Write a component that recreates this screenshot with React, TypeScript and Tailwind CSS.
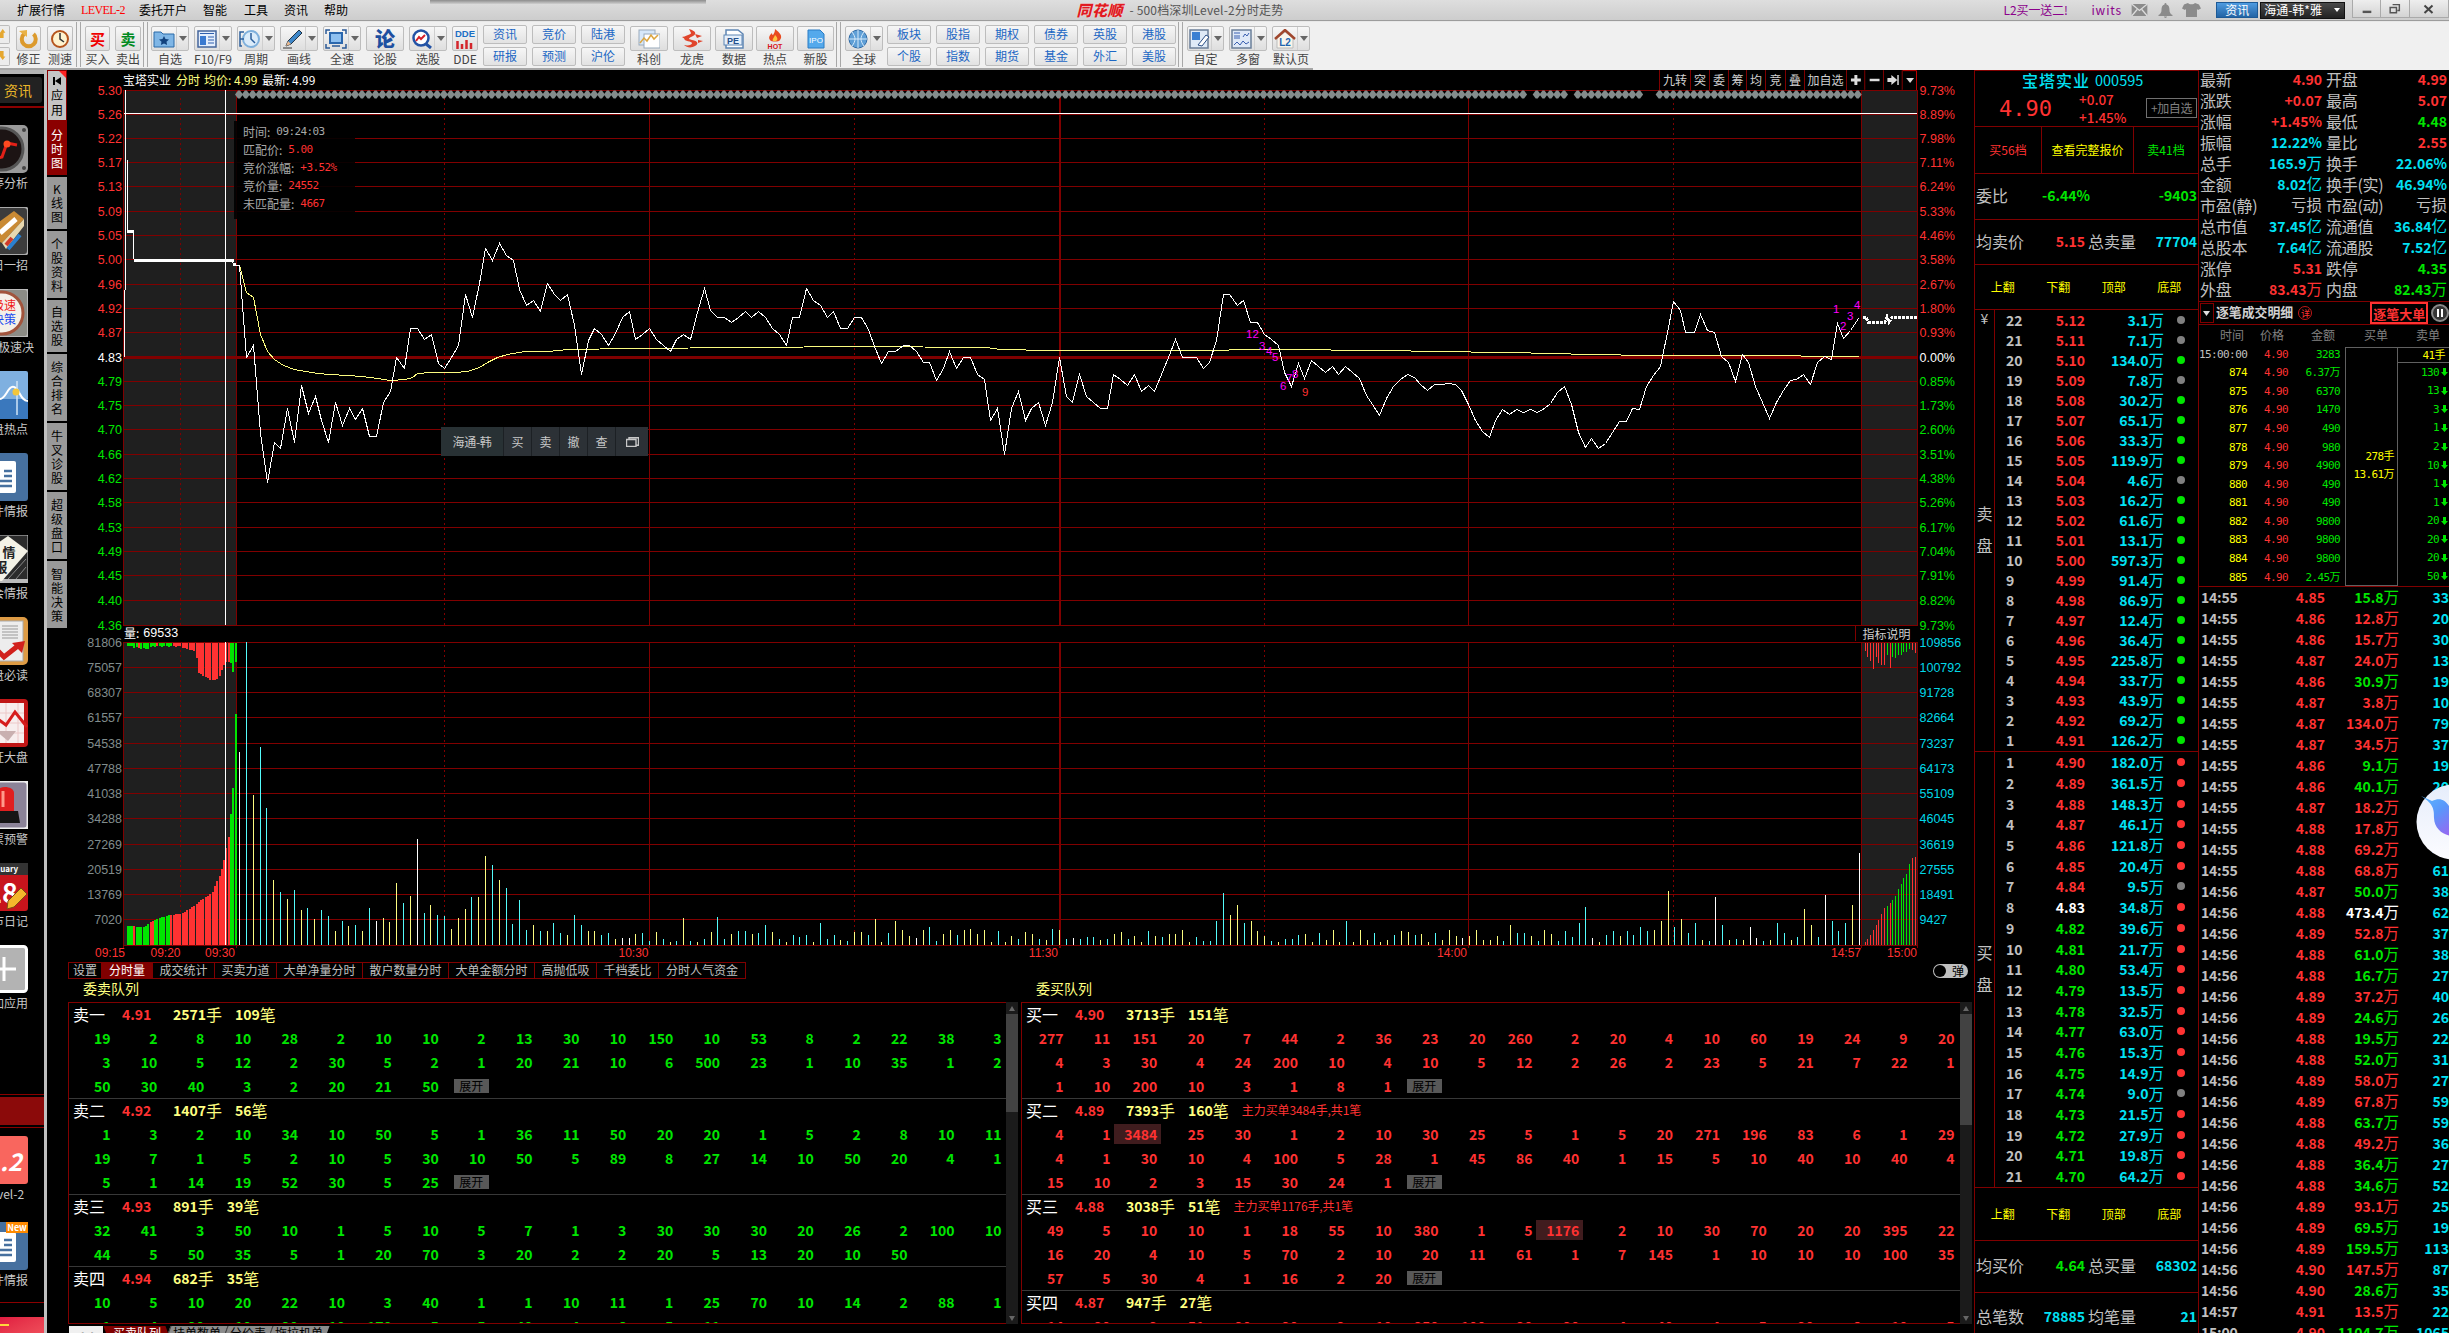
import React from "react";

const CJK = "font-['Noto_Sans_CJK_SC','Liberation_Sans',sans-serif]";

/* ---------- top bars ---------- */

function MenuBar() {
  const items = [
    ["扩展行情", "ml-[17px] text-black"],
    ["LEVEL-2", "ml-[16px] w-[42px] font-['Liberation_Serif'] tracking-[-0.6px] text-[#ff0000] text-[12px]"],
    ["委托开户", "ml-[16px] text-black"],
    ["智能", "ml-[16px] text-black"],
    ["工具", "ml-[17px] text-black"],
    ["资讯", "ml-[16px] text-black"],
    ["帮助", "ml-[16px] text-black"],
  ];
  return (
    <div className="relative flex h-[20px] shrink-0 items-center bg-linear-to-b from-[#dedede] to-[#cdcdcd] text-[12px] leading-none whitespace-nowrap">
      {items.map(([t, c]) => (
        <span key={t} className={c}>{t}</span>
      ))}
      <div className="ml-[82px] h-[4px] w-[276px] self-start bg-linear-to-b from-[#8d8d8d] to-[#cfcfcf]" />
      <div className="ml-[371px] flex items-center">
        <span className="w-[50px] text-[15px] leading-[16px] font-black tracking-[0.5px] text-[#e01b22] italic [text-shadow:0_0_1px_#fff]">同花顺</span>
        <span className="ml-[3px] w-[160px] text-[12px] tracking-[0.15px] text-[#555]">- 500档深圳Level-2分时走势</span>
      </div>
      <span className="ml-[714px] w-[70px] tracking-[-0.1px] text-[#8b008b]">L2买一送二!</span>
      <span className="ml-[18px] w-[32px] tracking-[0.9px] text-[#8b008b]">iwits</span>
      <svg className="ml-[8px] h-[12px] w-[17px]" viewBox="0 0 17 13"><rect width="17" height="13" fill="#8b8b8b" /><path d="M0 0L8.500 7L17 0M0 13L6 6M17 13L11 6" stroke="#ddd" fill="none" strokeWidth="1.400" /></svg>
      <svg className="ml-[10px] h-[15px] w-[15px]" viewBox="0 0 15 15"><path d="M7.500 0c1 0 1 1 1 1.500 2.500.8 3 3 3 5.500 0 2.500 1 4 3 5v1H.5v-1c2-1 3-2.500 3-5 0-2.500.5-4.700 3-5.500 0-.5 0-1.500 1-1.500zM6 13.600h3c0 1.800-3 1.800-3 0z" fill="#8b8b8b" /></svg>
      <svg className="ml-[9px] h-[14px] w-[19px]" viewBox="0 0 19 14"><path d="M6 0c1 1.800 6 1.800 7 0l4 1.500 2 4-3 1.500-1-1V14H4V6L3 7 0 5.500l2-4z" fill="#8b8b8b" /></svg>
      <div className="ml-[15px] flex h-[16px] w-[42px] items-center justify-center border border-[#1d5a96] bg-linear-to-b from-[#4e9be0] to-[#2364a5] text-white">资讯</div>
      <div className="ml-[2px] flex h-[17px] w-[85px] items-center justify-between border border-[#111] bg-linear-to-b from-[#4a4a4a] to-[#222] pr-[4px] pl-[3px] text-white">
        海通-韩*雅
        <svg className="h-[4px] w-[6px]" viewBox="0 0 6 4"><path d="M0 0h6L3 4z" fill="#fff" /></svg>
      </div>
      <div className="ml-[7px] flex h-[18px] self-start border border-t-0 border-[#aaa] bg-linear-to-b from-[#eee] to-[#d4d4d4]">
        <svg className="h-[17px] w-[28px] border-r border-[#aaa]" viewBox="0 0 28 17"><path d="M10 12h9" stroke="#555" strokeWidth="2.500" /></svg>
        <svg className="h-[17px] w-[29px] border-r border-[#aaa]" viewBox="0 0 29 17"><path d="M12 4.500h7v6h-2M9.500 7.500h6.500v5.500h-6.500z" stroke="#555" strokeWidth="1.500" fill="none" /></svg>
        <svg className="h-[17px] w-[38px]" viewBox="0 0 38 17"><path d="M14.500 5.500l8 7.500M22.500 5.500l-8 7.500" stroke="#444" strokeWidth="2" /></svg>
      </div>
    </div>
  );
}

const ICONS: Record<string, React.ReactNode> = {
  fix: (<><path d="M6 5a7 7 0 1 0 9.500 0" stroke="#dc9a2c" strokeWidth="4" fill="none" /><path d="M1 2l8-1 0 7z" fill="#e9b246" /></>),
  clock: (<><circle cx="11" cy="10" r="8" fill="#fff3cf" stroke="#b5541c" strokeWidth="2" /><path d="M11 4v6l4 3" stroke="#333" strokeWidth="1.500" fill="none" /></>),
  folder: (<><path d="M1 3h7l2 2h11v13H1z" fill="#7fb6e6" stroke="#2a6aa8" /><path d="M11 7l1.500 3 3.500.5-2.500 2.200.6 3.300-3.100-1.600-3.100 1.600.6-3.300L6 10.500l3.500-.5z" fill="#12427e" /></>),
  doc: (<><rect x="2" y="2" width="18" height="16" fill="#e4eefc" stroke="#44669c" strokeWidth="1.500" /><rect x="4" y="7" width="6" height="9" fill="#3a7ad0" /><path d="M4 4.500h14M12 8h6M12 11h6M12 14h6" stroke="#2f5fae" /></>),
  period: (<><circle cx="12" cy="10" r="8" fill="#dcecfa" stroke="#7fb0dc" strokeWidth="2" /><path d="M12 4v6l4 4M5 3H1v14h2M1 10h4" stroke="#2c5f9c" strokeWidth="1.500" fill="none" /></>),
  pen: (<><path d="M4 17l2-5L17 1l3 3L9 15z" fill="#3d86c8" stroke="#234" /><path d="M4 17l2-5 3 3z" fill="#e9b98f" /><path d="M1 19h9" stroke="#333" /></>),
  speed: (<><rect x="5" y="4" width="12" height="10" fill="#8ec0f0" stroke="#2b67ad" strokeWidth="2" /><path d="M7 17h8M1 5V1h4M17 1h4v4M1 15v4h4M17 19h4v-4" stroke="#2b5a97" strokeWidth="1.500" fill="none" /></>),
  search: (<><circle cx="10" cy="9" r="7.500" fill="#fff" stroke="#2352a5" strokeWidth="2.500" /><path d="M5 12l3-4 2 2 4-4" stroke="#d5202a" strokeWidth="2" fill="none" /><path d="M15 15l5 4" stroke="#2352a5" strokeWidth="3" /></>),
  chart: (<><rect x="1" y="1" width="16" height="15" fill="#d7e8fa" stroke="#9ab" /><rect x="6" y="5" width="16" height="14" fill="#fff" stroke="#9ab" /><path d="M2 14l4-5 3 3 4-6 3 4 4-4" stroke="#dca53e" strokeWidth="1.500" fill="none" /></>),
  dragon: <path d="M8 0c7 2 8 5 4 7-4 2-6 3-1 4 6 1 7 4 3 6-3 2-8 2-11-1 4 1 8 0 8-2 0-2-8-1-8-5 0-3 7-3 7-5zM14 5l7 2-5 2M17 11l5 1-5 2M1 8l5-1-2 3" fill="#e0452c" />,
  pe: (<><path d="M3 1h12l5 4v14H3z" fill="#fff" stroke="#5f86b4" strokeWidth="1.500" /><rect x="1" y="6" width="18" height="10" fill="#e6f0fb" stroke="#5f86b4" /><text x="10" y="14.500" fontSize="9" fontWeight="bold" textAnchor="middle" fill="#24508c">PE</text></>),
  hot: (<><path d="M11 0c5 4 8 7 5 11-1 2-9 2-10 0-2-3 0-5 2-7 0 2 1 2 1 2 1-2 2-3 2-6z" fill="#e94a1f" /><path d="M11 6c3 3 3 5 1 6h-3c-1-2 1-3 2-6z" fill="#ffc640" /><text x="11" y="19.500" fontSize="7" fontWeight="bold" textAnchor="middle" fill="#d7141a">HOT</text></>),
  ipo: (<><path d="M3 1h12l4 4v14H3z" fill="#54a9ec" stroke="#2a7cc4" /><text x="11" y="13.500" fontSize="8" textAnchor="middle" fill="#fff">IPO</text></>),
  globe: (<><circle cx="11" cy="10" r="9" fill="#5f9fd6" stroke="#2f6aa5" /><path d="M2 10h18M11 1v18M5 3c4 5 4 9 0 14M17 3c-4 5-4 9 0 14" stroke="#d6eafa" fill="none" /></>),
  custom: (<><rect x="1" y="1" width="18" height="18" fill="#dfeaf7" stroke="#6b7f99" strokeWidth="1.500" /><rect x="3" y="3" width="8" height="8" fill="#3a7fd2" /><path d="M9 16l8-10 3 2-7 9z" fill="#fff" stroke="#2b4f86" /></>),
  windows: (<><rect x="1" y="1" width="19" height="18" fill="#dfe9f7" stroke="#6b7f99" strokeWidth="1.500" /><path d="M3 4h6M3 7h6M3 9h6M12 8l2-3 2 2 2-3M3 16l3-3 3 3 3-4 3 3 3-2" stroke="#3b60b0" fill="none" /></>),
  home: (<><path d="M3 9v10h16V9L11 3z" fill="#f8f5ec" stroke="#bbb" /><path d="M1 10L11 1l10 9" stroke="#a0472e" strokeWidth="2.500" fill="none" /><text x="11" y="17" fontSize="10" fontWeight="bold" textAnchor="middle" fill="#1f66b0">L2</text></>),
  dde: (<><text x="11" y="8" fontSize="9.500" fontWeight="bold" textAnchor="middle" fill="#1d6fc4">DDE</text><path d="M3.500 20v-8M8 20v-5M12.500 20v-9M17 20v-6" stroke="#d3262c" strokeWidth="2.500" /></>),
};

function Tool({ label, cls, icon, glyph, arrow }: { label: string; cls: string; icon?: string; glyph?: React.ReactNode; arrow?: boolean }) {
  return (
    <div className={"flex shrink-0 flex-col items-center pt-[4px] " + cls}>
      <div className="flex h-[25px] w-full items-center rounded-[2px] border border-[#bdbdbd] bg-linear-to-b from-[#f7f7f7] to-[#dedede]">
        <div className="flex flex-1 items-center justify-center">
          {glyph ?? <svg className="h-[20px] w-[22px]" viewBox="0 0 22 20" fontFamily="Liberation Sans">{ICONS[icon!]}</svg>}
        </div>
        {arrow && (
          <div className="flex h-full w-[12px] items-center justify-center border-l border-[#cfcfcf]">
            <svg className="h-[5px] w-[8px]" viewBox="0 0 8 5"><path d="M0 0h8L4 5z" fill="#666" /></svg>
          </div>
        )}
      </div>
      <span className="mt-[2px] text-[12px] leading-[12px] whitespace-nowrap text-[#444]">{label}</span>
    </div>
  );
}

function Pair({ a, b, cls }: { a: string; b: string; cls: string }) {
  return (
    <div className={"flex w-[44px] shrink-0 flex-col gap-[3px] pt-[3px] " + cls}>
      {[a, b].map((t) => (
        <div key={t} className="flex h-[19px] items-center justify-center rounded-[2px] border border-[#bdbdbd] bg-linear-to-b from-[#f6f6f6] to-[#e2e2e2] pb-px text-[12px] leading-none text-[#1c67c4]">{t}</div>
      ))}
    </div>
  );
}

function Sep({ cls }: { cls: string }) {
  return <div className={"flex h-[45px] w-[5px] shrink-0 justify-between border-x border-[#a8a8a8] " + cls} />;
}

function Toolbar() {
  return (
    <div className="flex h-[48px] shrink-0 bg-[#f0f0f0]">
      <div className="flex w-[1313px] border-b-2 border-[#a6a6a6]">
        <div className="flex w-[10px] shrink-0 flex-col gap-[3px] pt-[3px]">
          {["M0 6L3 2L6 6H4V12H0z", "M0 8L3 12L6 8H4V2H0z"].map((d) => (
            <svg key={d} className="h-[19px] w-[10px] rounded-r-[2px] border border-l-0 border-[#bdbdbd] bg-[#ececec]" viewBox="0 0 10 16"><path d={d} fill="#e5a72f" /></svg>
          ))}
        </div>
        <Tool label="修正" cls="ml-[6px] w-[25px]" icon="fix" />
        <Tool label="测速" cls="ml-[6px] w-[26px]" icon="clock" />
        <Sep cls="ml-[3px]" />
        <Tool label="买入" cls="ml-[4px] w-[25px]" glyph={<b className="text-[15px] leading-none text-[#f00000]">买</b>} />
        <Tool label="卖出" cls="ml-[5px] w-[26px]" glyph={<b className="text-[15px] leading-none text-[#008a20]">卖</b>} />
        <Sep cls="ml-[2px]" />
        <Tool label="自选" cls="ml-[3px] w-[38px]" icon="folder" arrow />
        <Tool label="F10/F9" cls="ml-[5px] w-[38px]" icon="doc" arrow />
        <Tool label="周期" cls="ml-[5px] w-[38px]" icon="period" arrow />
        <Tool label="画线" cls="ml-[5px] w-[38px]" icon="pen" arrow />
        <Tool label="全速" cls="ml-[5px] w-[38px]" icon="speed" arrow />
        <Tool label="论股" cls="ml-[5px] w-[38px]" glyph={<b className="text-[20px] leading-none font-black text-[#1d4fa0]">论</b>} />
        <Tool label="选股" cls="ml-[5px] w-[38px]" icon="search" arrow />
        <Tool label="DDE" cls="ml-[5px] w-[26px]" icon="dde" />
        <Pair a="资讯" b="研报" cls="ml-[5px]" />
        <Pair a="竞价" b="预测" cls="ml-[5px]" />
        <Pair a="陆港" b="沪伦" cls="ml-[5px]" />
        <Tool label="科创" cls="ml-[5px] w-[38px]" icon="chart" />
        <Tool label="龙虎" cls="ml-[5px] w-[38px]" icon="dragon" />
        <Tool label="数据" cls="ml-[4px] w-[38px]" icon="pe" />
        <Tool label="热点" cls="ml-[3px] w-[38px]" icon="hot" />
        <Tool label="新股" cls="ml-[3px] w-[37px]" icon="ipo" />
        <Sep cls="ml-[2px]" />
        <Tool label="全球" cls="ml-[4px] w-[38px]" icon="globe" arrow />
        <Pair a="板块" b="个股" cls="ml-[4px]" />
        <Pair a="股指" b="指数" cls="ml-[5px]" />
        <Pair a="期权" b="期货" cls="ml-[5px]" />
        <Pair a="债券" b="基金" cls="ml-[5px]" />
        <Pair a="英股" b="外汇" cls="ml-[5px]" />
        <Pair a="港股" b="美股" cls="ml-[5px]" />
        <Sep cls="ml-[2px]" />
        <Tool label="自定" cls="ml-[4px] w-[37px]" icon="custom" arrow />
        <Tool label="多窗" cls="ml-[5px] w-[38px]" icon="windows" arrow />
        <Tool label="默认页" cls="ml-[5px] w-[38px]" icon="home" arrow />
      </div>
    </div>
  );
}

/* ---------- left side ---------- */

const SIDE: [string, string, React.ReactNode][] = [
  ["涨停分析", "停", <><rect width="48" height="48" rx="5" fill="#9a9a9a" /><circle cx="22" cy="24" r="21" fill="#1c1414" stroke="#555" strokeWidth="3" /><circle cx="44" cy="5" r="2" fill="#444" /><circle cx="44" cy="43" r="2" fill="#444" /><path d="M14 34l8-2 5-14 10 2" stroke="#e32018" strokeWidth="3" fill="none" /><circle cx="27" cy="19" r="3.500" fill="#ff4a20" /></>],
  ["每日一招", "招", <><rect width="48" height="48" rx="4" fill="#3c3c3c" stroke="#aaa" strokeWidth="2" /><path d="M4 26L34 4l10 8-22 24z" fill="#c98a34" /><path d="M22 36l22-24v7L26 42z" fill="#e8d8b0" /><path d="M28 42l12-14" stroke="#2a80d0" strokeWidth="4" /><path d="M26 38l6-7" stroke="#d03a2a" strokeWidth="4" /><path d="M20 26l16-14" stroke="#fff" strokeWidth="5" /></>],
  ["股票极速决", "策", <><rect width="48" height="48" rx="3" fill="#8c8c86" stroke="#bbb" strokeWidth="2" /><circle cx="22" cy="24" r="21" fill="#f4f0e8" stroke="#a2543c" strokeWidth="3" /><text x="24" y="21" fontSize="12" textAnchor="middle" fill="#f01818">极速</text><text x="24" y="35" fontSize="12" textAnchor="middle" fill="#1848f0">决策</text></>],
  ["尾盘热点", "热", <><rect width="48" height="48" rx="2" fill="#7fb0e0" /><path d="M0 28h48v20H0z" fill="#3a78bd" /><path d="M0 20c8 12 14 8 20 8s8-14 14-12 6 14 14 14" stroke="#fff" strokeWidth="2" fill="none" /><path d="M37 10v34" stroke="#cfe4f8" strokeWidth="1.500" /><circle cx="36" cy="21" r="3.500" fill="#f2c63c" /></>],
  ["事件情报", "件", <><rect width="48" height="48" rx="3" fill="#46709f" /><rect x="4" y="8" width="32" height="32" rx="2" fill="#fff" /><path d="M8 18h12M24 18h8M8 23h12M24 23h8M8 28h24M8 33h24" stroke="#46709f" strokeWidth="2.500" /></>],
  ["社会情报", "会", <><rect width="48" height="48" fill="#2b2b2b" stroke="#ccc" /><path d="M0 44h48v4H0z" fill="#bbb" /><path d="M28 44l18-20M36 44l10-12" stroke="#888" /><path d="M28 1L48 16 22 46H0V20z" fill="#f4f2e6" /><text x="29" y="22" fontSize="13" fontWeight="bold" textAnchor="middle" fill="#222">情</text><text x="21" y="37" fontSize="13" fontWeight="bold" textAnchor="middle" fill="#222">报</text></>],
  ["开盘必读", "读", <><rect width="48" height="48" rx="5" fill="#dd9b45" /><rect x="3" y="4" width="40" height="40" fill="#ededed" stroke="#aaa" /><path d="M22 9h16M22 12h16M22 15h16M22 18h16M22 21h16" stroke="#999" /><path d="M4 32l12 0 8 8 15-12" stroke="#d1201c" strokeWidth="5" fill="none" /><path d="M32 26l13-2-3 12z" fill="#d1201c" /></>],
  ["上证大盘", "盘", <><rect width="48" height="48" rx="4" fill="#c01616" /><rect x="3" y="4" width="41" height="40" fill="#f7eeee" /><path d="M3 14h41M3 24h41M3 34h41M14 4v40M26 4v40M38 4v40" stroke="#ecc8c8" /><path d="M0 28l8 6 10-14 8 6 9-13 12 15" stroke="#d61c1c" strokeWidth="3" fill="none" /><path d="M16 32l20 0-8 10z" fill="#c9b0b0" /></>],
  ["股票预警", "警", <><rect width="48" height="48" rx="4" fill="#8b8398" stroke="#eee" strokeWidth="3" /><path d="M16 30V12c0-8 18-8 18 0v18z" fill="#e01f1f" /><path d="M23 10v16" stroke="#ff9b8b" strokeWidth="3" /><path d="M12 30h26l2 12H10z" fill="#151515" /></>],
  ["股市日记", "记", <><rect width="48" height="48" rx="3" fill="#c8141c" /><path d="M0 0h48v12H0z" fill="#333" /><text x="22" y="9" fontSize="8" fontWeight="bold" textAnchor="middle" fill="#fff">January</text><text x="22" y="40" fontSize="27" fontWeight="bold" textAnchor="middle" fill="#fff">28</text><path d="M28 38l13-13 6 6-13 13-7 2z" fill="#f4b62c" stroke="#7a4b12" /></>],
  ["添加应用", "加", <><rect x="1.500" y="1.500" width="45" height="45" rx="3" fill="#b3b3b3" stroke="#fff" strokeWidth="3" /><path d="M24 12v24M12 24h24" stroke="#fff" strokeWidth="3" /></>],
];

function SideItem({ label, children }: { label: string; children: React.ReactNode }) {
  return (
    <div className="flex h-[82px] shrink-0 flex-col items-center">
      <svg className="h-[48px] w-[48px] shrink-0" viewBox="0 0 48 48" fontFamily="Noto Sans CJK SC">{children}</svg>
      <span className="mt-[4px] text-[12px] leading-[12px] whitespace-nowrap text-[#c8c8c8]">{label}</span>
    </div>
  );
}

function Sidebar() {
  return (
    <div className="flex w-[44px] shrink-0 flex-col overflow-hidden border-t-4 border-[#b5b5b5] bg-black">
      <div className="mt-[3px] flex h-[26px] w-[42px] shrink-0 items-center rounded-r-[3px] bg-[#222] pl-[4px] text-[14px] leading-none text-[#e8b52a]">资讯</div>
      <div className="mt-[3px] h-[2px] shrink-0 bg-[#8b0000]" />
      <div className="mt-[17px] -ml-[20px] flex h-[968px] w-[48px] shrink-0 flex-col">
        {SIDE.map(([label, k, icon]) => (
          <SideItem key={k} label={label}>{icon}</SideItem>
        ))}
      </div>
      <div className="mt-px flex h-[34px] shrink-0 flex-col border-y border-[#8b0000] py-[2px]"><div className="flex-1 bg-[#8b0a0a]" /></div>
      <div className="mt-[8px] -ml-[20px] flex h-[164px] w-[48px] shrink-0 flex-col">
        <SideItem label="Level-2"><rect width="48" height="48" rx="3" fill="#f9665e" /><text x="24" y="35" fontSize="24" fontWeight="bold" fontStyle="italic" textAnchor="middle" fill="#fff">L.2</text></SideItem>
        <div className="h-[4px] shrink-0" />
        <SideItem label="事件情报"><rect width="48" height="48" rx="3" fill="#46709f" /><rect x="4" y="10" width="32" height="30" rx="2" fill="#fff" /><path d="M8 18h12M24 18h8M8 23h12M24 23h8M8 28h24M8 33h24" stroke="#46709f" strokeWidth="2.500" /><rect x="26" width="22" height="11" fill="#ff8a00" /><text x="37" y="9" fontSize="9" fontWeight="bold" textAnchor="middle" fill="#fff">New</text></SideItem>
      </div>
      <div className="mt-[2px] h-px shrink-0 bg-[#8b0000]" />
      <div className="mt-[14px] h-[20px] shrink-0 bg-linear-to-br from-[#e01a40] to-[#f0505c]"><div className="mt-[7px] h-[2px] w-[9px] bg-[#ffd83c]" /></div>
    </div>
  );
}

const VTABS = [
  ["个股资料", "h-[69px]"], ["自选股", "h-[54px]"], ["综合排名", "h-[69px]"],
  ["牛叉诊股", "h-[69px]"], ["超级盘口", "h-[69px]"], ["智能决策", "h-[69px]"],
];

function VTab({ t, cls }: { t: string; cls: string }) {
  return (
    <div className={"flex shrink-0 flex-col items-center justify-center border-b-2 border-black text-[12px] leading-[14px] " + cls}>
      {t.split("").map((ch, i) => <span key={i}>{ch}</span>)}
    </div>
  );
}

function VTabs() {
  return (
    <div className="flex w-[20px] shrink-0 flex-col bg-black">
      <div className="relative flex h-[52px] shrink-0 flex-col items-center border border-b-2 border-[#8b0000] bg-[#c4c4c4] pt-[6px] text-[12px] leading-[15px] text-black">
        <svg className="mb-[2px] h-[8px] w-[8px] shrink-0" viewBox="0 0 8 8"><path d="M0 0h2v8H0zM8 0v8L2 4z" /></svg>
        <span>应</span><span>用</span>
        <svg className="absolute top-0 right-0 h-[7px] w-[7px]" viewBox="0 0 7 7"><path d="M0 0h7v7z" fill="#f22" /></svg>
      </div>
      <VTab t="分时图" cls="h-[55px] bg-[#8b0000] text-white" />
      <VTab t="K线图" cls="h-[54px] bg-[#999] text-black" />
      {VTABS.map(([t, c]) => <VTab key={t} t={t} cls={c + " bg-[#999] text-black"} />)}
    </div>
  );
}

/* ---------- charts ---------- */

const GRID = [90, 114, 138, 162, 186, 211, 235, 259, 284, 308, 332, 357, 381, 405, 429, 454, 478, 502, 527, 551, 575, 600, 625];
const PRICES = ["5.30", "5.26", "5.22", "5.17", "5.13", "5.09", "5.05", "5.00", "4.96", "4.92", "4.87", "4.83", "4.79", "4.75", "4.70", "4.66", "4.62", "4.58", "4.53", "4.49", "4.45", "4.40", "4.36"];
const PCTS = ["9.73%", "8.89%", "7.98%", "7.11%", "6.24%", "5.33%", "4.46%", "3.58%", "2.67%", "1.80%", "0.93%", "0.00%", "0.85%", "1.73%", "2.60%", "3.51%", "4.38%", "5.26%", "6.17%", "7.04%", "7.91%", "8.82%", "9.73%"];
const VGRID = [642, 667, 692, 717, 743, 768, 793, 818, 844, 869, 894, 919, 945];
const VOLS = ["81806", "75057", "68307", "61557", "54538", "47788", "41038", "34288", "27269", "20519", "13769", "7020"];
const VOLS_R = ["109856", "100792", "91728", "82664", "73237", "64173", "55109", "46045", "36619", "27555", "18491", "9427"];

const PRICE_A = "0,120 8,136 14,136 25,412 35,376 46,640 56,788 67,668 76,685 86,565 97,668 107,496 117,581 127,530 137,600 147,668 158,548 168,617 179,565 188,599 198,565 209,650 219,650 229,548 240,513 249,412 260,446 269,325 280,325 291,358 301,342 311,430 321,445 331,412 341,375 351,223 362,293 372,190 382,86 392,122 403,70 413,105 423,120 433,207 443,257 453,241 463,274 474,190 484,224 494,240 504,223 515,315 525,464 535,360 545,325 555,342 565,377 576,340 586,292 597,274 606,357 616,344 627,325 637,358 648,375 658,394 667,358 677,343 688,357 698,278 708,206 718,272 728,292 738,292 749,308 759,293 770,274 779,292 789,274 799,292 810,325 820,342 831,377 840,292 850,292 861,206 872,240 882,257 892,292 901,275 912,325 922,325 932,292 943,292 953,328 963,378 973,429 983,395 994,394 1005,376 1015,376 1025,394 1035,428 1045,428 1055,480 1065,446 1075,395 1085,446 1095,412 1106,412 1116,463 1126,479 1136,600 1146,566 1157,702 1167,566 1177,515 1188,600 1197,565 1208,548 1218,617 1228,548 1239,412 1249,530 1258,548 1268,463 1279,530 1289,548 1300,565 1310,565 1320,463 1330,478 1340,496 1350,463 1361,515 1372,496 1381,515 1391,464 1402,412 1412,358 1422,412 1443,412 1453,445 1463,428 1473,360 1483,223 1493,223 1504,257 1514,241 1524,307 1535,307 1545,344 1555,358 1565,377";
const AVG_A = "14,136 25,217 35,232 46,342 56,394 67,418 80,436 96,449 130,459 150,463 198,468 220,475 240,481 262,479 272,472 280,461 300,458 335,457 355,453 372,442 385,427 400,413 415,403 440,395 475,393 505,388 600,385 775,383 940,380 1130,383 1150,387 1225,391 1485,390 1500,388 1568,388";
const map = (s: string) =>
  s.split(" ").map((p) => {
    const [x, y] = p.split(",").map(Number);
    return Math.floor(230 + x / 1.4933) + 0.5 + "," + (Math.floor(220 + y / 3) + 0.5);
  }).join(" ");
const half = (s: string) =>
  s.split(" ").map((p) => p.split(",").map((n) => Number(n) + 0.5).join(",")).join(" ");
const PRICE_B = "1284,372 1291,386 1298,363 1304,378 1311,360 1318,366 1325,372 1332,366 1338,374 1345,366 1352,372 1359,378 1366,395 1372,404 1379,415 1386,398 1393,386 1400,379 1407,374 1414,377 1420,384 1427,390 1434,384 1441,384 1448,383 1455,384 1461,390 1468,404 1475,420 1482,431 1489,437 1495,420 1502,409 1509,414 1516,409 1523,412 1530,409 1537,412 1544,408 1550,403 1557,392 1564,386 1571,404 1578,432 1585,447 1591,438 1598,448 1605,443 1612,432 1619,421 1626,421 1632,408 1639,409 1646,386 1653,375 1660,366 1667,332 1673,301 1680,310 1685,332 1694,332 1700,314 1707,330 1714,332 1721,356 1728,362 1735,381 1742,354 1748,362 1755,386 1762,402 1769,418 1776,402 1783,390 1790,380 1796,379 1803,374 1810,384 1817,362 1824,356 1831,359 1837,323 1843,338 1850,330 1858,318";
const AVG_B = "1280,349 1330,349 1331,350 1410,350 1411,351 1470,351 1471,352 1530,352 1531,353 1570,353 1571,354 1620,354 1621,355 1800,355 1801,356 1858,356";

const VOL_A = "w193 c303 y150 c198 c137 y65 c53 y46 c55 y35 c37 y26 c35 c29 y14 c24 y19 c20 y14 c37 w24 y27 y23 y62 c42 y49 w106 c32 y40 c30 c29 y16 y27 y36 c48 y48 y89 c80 y65 c57 c21 c45 c15 y20 c14 y14 c22 c12 y10 c30 c20 y14 y14 c10 c12 y6".split(" ");
const PEAKS: Record<number, number> = { 65: 27, 70: 28, 77: 20, 85: 22, 93: 26, 96: 24, 101: 18, 107: 16, 119: 16, 143: 24, 144: 52, 145: 30, 146: 40, 147: 22, 148: 24, 149: 14, 162: 24, 170: 14, 186: 20, 196: 22, 197: 38, 205: 18, 208: 24, 209: 54, 210: 18, 211: 26, 213: 22, 216: 48, 217: 20, 221: 18, 225: 22, 229: 36, 230: 20, 232: 50, 233: 24, 234: 14, 235: 22, 236: 40, 237: 92 };
const volumes = Array.from({ length: 238 }, (_, i) => {
  if (i < VOL_A.length) return VOL_A[i];
  const r = (i * 7919 + ((i * i * 31) % 97)) % 13;
  const k = r === 4 ? "w" : r % 2 ? "c" : "y";
  return k + (PEAKS[i] ?? 3 + r);
});
const VOL_COLORS: Record<string, string> = { w: "#ffffff", c: "#54fcfc", y: "#fcfc80" };
const RED = "#ff3232";
const GREEN = "#00e600";

function lerp(points: number[][], x: number) {
  for (let i = 1; i < points.length; i++) {
    if (x <= points[i][0]) {
      const [x0, y0] = points[i - 1];
      const [x1, y1] = points[i];
      return y0 + ((y1 - y0) * (x - x0)) / (x1 - x0);
    }
  }
  return points[points.length - 1][1];
}

const OPEN_UP = [[126, 19], [144, 18], [151, 24], [168, 30], [180, 31], [190, 37], [202, 46], [211, 52], [219, 70], [223, 84], [227, 105], [229, 114], [231, 147], [233, 163], [234, 203], [235, 249]];
const OPEN_DOWN = [[126, 2], [145, 6], [152, 3], [180, 3], [195, 9], [197, 29], [205, 34], [213, 38], [219, 32], [224, 19], [231, 19], [233, 34], [236, 6]];
const openBars = Array.from({ length: 48 }, (_, i) => {
  const x = 126.5 + i * 2.3;
  const green = (x < 149 && i !== 3) || (x > 154 && x < 170) || x > 229.5;
  return { x, up: Math.round(lerp(OPEN_UP, x)), down: Math.round(lerp(OPEN_DOWN, x)) + (i % 3 === 0 ? 1 : 0), c: green ? GREEN : RED, d: x < 171 && i % 8 !== 5 ? GREEN : x > 229.5 ? GREEN : RED };
});
const CLOSE_BARS = "r3,8 r6,14 r10,18 r15,26 r20,14 r25,20 r31,22 r37,22 g39,12 r42,25 g45,14 g49,15 g56,12 g61,12 g67,9 g71,9 g81,6 r87,7 r88,10".split(" ");

const minutes = Array.from({ length: 239 }, (_, i) => 239 + i * 6.83);
const diamonds = minutes.filter((x) => !(x > 1526 && x < 1534) && !(x > 1566.5 && x < 1574) && !(x > 1642 && x < 1658) && x < 1862);
const DIGITS: [number, number, string, string][] = [
  [1246, 338, "12", "#ff00ff"], [1259, 350, "3", "#ff00ff"], [1266, 355, "4", "#ff00ff"], [1272, 361, "5", "#ff00ff"], [1280, 390, "6", "#ff00ff"], [1286, 382, "7", "#ff00ff"], [1292, 378, "8", "#ff00ff"], [1302, 396, "9", "#ff3232"],
  [1833, 313, "1", "#ff00ff"], [1840, 330, "2", "#ff00ff"], [1847, 320, "3", "#ff00ff"], [1854, 309, "4", "#ff00ff"],
];

function Charts() {
  return (
    <svg className="h-[872px] w-[1906px] overflow-visible" viewBox="68 90 1906 872" fontFamily="Liberation Sans" fontSize="12.500" shapeRendering="crispEdges">
      <rect x="124" y="90" width="112" height="535" fill="#1f1f1f" />
      <rect x="124" y="642" width="112" height="303" fill="#1f1f1f" />
      <rect x="1862" y="90" width="55" height="535" fill="#1f1f1f" />
      <rect x="1862" y="642" width="55" height="303" fill="#1f1f1f" />
      {GRID.map((y, i) => <rect key={y} x="123" y={i === 11 ? y - 1 : y} width="1795" height={i === 11 ? 3 : 1} fill="#800000" />)}
      {VGRID.map((y) => <rect key={y} x="123" y={y} width="1795" height="1" fill="#800000" />)}
      {[[123, 1], [236, 1], [649, 1], [1059, 2], [1468, 1], [1861, 1], [1917, 1]].map(([x, w]) => (
        <g key={x} fill="#800000"><rect x={x} y="90" width={w} height="535" /><rect x={x} y="642" width={w} height="306" /></g>
      ))}
      {[180, 444, 854, 1264, 1673].map((x) => (
        <g key={x} stroke="#800000" strokeDasharray="2 3"><path d={`M${x + 0.5} 98V625`} /><path d={`M${x + 0.5} 645V945`} /></g>
      ))}
      {diamonds.map((x) => <path key={x} d={`M${x - 4} 94.500L${x - 1} 90.500H${x + 1}L${x + 4} 94.500L${x + 1} 98.500H${x - 1}Z`} fill="#848c8c" shapeRendering="auto" />)}

      {volumes.map((b, i) => {
        const h = Number(b.slice(1));
        return <rect key={i} x={Math.round(239 + i * 6.835)} y={945 - h} width="1" height={h} fill={VOL_COLORS[b[0]]} />;
      })}
      {openBars.map((b) => (
        <g key={b.x}>
          <rect x={Math.round(b.x)} y={945 - b.up} width="1.500" height={b.up} fill={b.c} />
          <rect x={Math.round(b.x)} y="643" width="1.500" height={b.down} fill={b.d} />
        </g>
      ))}
      {CLOSE_BARS.map((s, i) => {
        const [u, d] = s.slice(1).split(",").map(Number);
        const x = Math.round(1864.5 + i * 2.78);
        return <g key={i} fill={s[0] === "r" ? RED : GREEN}><rect x={x} y={945 - u} width="1" height={u} /><rect x={x} y="643" width="1" height={d} /></g>;
      })}

      <path d="M124 113.500H1917M225.500 90V625M225.500 642V945" stroke="#fff" fill="none" />
      <path d="M124.500 357V290M125.500 290V90M127.500 160V231H133.500V259" stroke="#fff" fill="none" />
      <path d="M127 231.500H133.500M134 260H234" stroke="#fff" strokeWidth="3" fill="none" />
      <rect x="233" y="263" width="3" height="3" fill="#fff" />
      <polyline points={map(AVG_A) + " " + half(AVG_B)} fill="none" stroke="#fcfc80" />
      <polyline points={map(PRICE_A) + " " + half(PRICE_B)} fill="none" stroke="#fff" />
      <path d="M1863 317h3l2 5h17l2-5 2 5 3-5h26" stroke="#fff" strokeWidth="3" strokeDasharray="3 1" fill="none" />
      {DIGITS.map(([x, y, t, c]) => <text key={x} x={x} y={y} fill={c} fontSize="11.500">{t}</text>)}

      {GRID.map((y, i) => {
        const c = i < 11 ? RED : i === 11 ? "#fff" : GREEN;
        return <g key={y} fill={c}><text x="122" y={y + 5} textAnchor="end">{PRICES[i]}</text><text x="1919.500" y={y + 5}>{PCTS[i]}</text></g>;
      })}
      {VOLS.map((t, i) => <text key={t} x="122" y={VGRID[i] + 5} textAnchor="end" fill="#808c8c">{t}</text>)}
      {VOLS_R.map((t, i) => <text key={t} x="1919.500" y={VGRID[i] + 5} fill="#02d8e8">{t}</text>)}
      {([[125, "09:15"], [180.5, "09:20"], [235, "09:30"], [648.5, "10:30"], [1058, "11:30"], [1467, "14:00"], [1861, "14:57"], [1917, "15:00"]] as [number, string][]).map(([x, t]) => (
        <text key={t} x={x} y="957" textAnchor="end" fill={RED} fontSize="12">{t}</text>
      ))}
    </svg>
  );
}

const CHART_BTNS = [["九转", "w-[31px]"], ["突", "w-[19px]"], ["委", "w-[19px]"], ["筹", "w-[18px]"], ["均", "w-[19px]"], ["竞", "w-[20px]"], ["叠", "w-[19px]"], ["加自选", "w-[42px]"]];

function ChartPanel() {
  return (
    <div className="relative flex h-[892px] shrink-0 flex-col">
      <div className="flex h-[20px] shrink-0 items-center pb-px pl-[55px] text-[12px] leading-none whitespace-nowrap">
        <span className="text-white">宝塔实业</span>
        <span className="ml-[5px] text-[#ffff80]">分时</span>
        <span className="ml-[4px] w-[55px] text-[#ffff80]">均价: 4.99</span>
        <span className="ml-[3px] w-[57px] text-white">最新: 4.99</span>
        <div className="mr-[57px] ml-auto flex h-[20px] text-[#d0d0d0]">
          {CHART_BTNS.map(([t, c]) => <span key={t} className={"flex items-center justify-center border-l border-[#800000] " + c}>{t}</span>)}
          <svg className="h-[20px] w-[71px] border-l border-[#800000]" viewBox="0 0 71 20"><path d="M4 10h10M9 5v10" stroke="#ddd" strokeWidth="3" /><path d="M23 10h10" stroke="#ddd" strokeWidth="2.500" /><path d="M41 8h4V5l6 5-6 5v-3h-4zM51 5h1.500v10H51z" fill="#ddd" /><path d="M60 8h8l-4 5z" fill="#ddd" /><path d="M18 0v20M37 0v20M56 0v20" stroke="#800000" /><path d="M56.500.5h14v20" stroke="#c00000" fill="none" /></svg>
        </div>
      </div>
      <Charts />
      <div className="absolute top-[556px] left-[56px] flex h-[14px] items-center bg-black text-[12px] leading-none text-white"><span className="pr-px">量:</span><span className="pl-[3px] font-['Liberation_Sans'] text-[12.500px]">69533</span></div>
      <div className="absolute top-[556px] right-[57px] flex h-[15px] w-[62px] items-center justify-center border-l border-[#800000] bg-black text-[12px] leading-none text-[#d0d0d0]">指标说明</div>
      <div className="absolute top-[51px] left-[166px] flex h-[98px] w-[121px] flex-col bg-black/90 pt-[2px] pl-[9px] text-[12px] leading-[18px] text-[#a8a8a8]">
        {[["时间", "09:24:03", "text-[#a8a8a8]"], ["匹配价", "5.00", "text-[#ff3232]"], ["竞价涨幅", "+3.52%", "text-[#ff3232]"], ["竞价量", "24552", "text-[#ff3232]"], ["未匹配量", "4667", "text-[#ff3232]"]].map(([k, v, c]) => (
          <div key={k} className="flex"><span>{k}:</span><span className={"pl-[6px] font-['DejaVu_Sans_Mono'] text-[11px] tracking-[-0.6px] " + c}>{v}</span></div>
        ))}
      </div>
      <div className="absolute top-[357px] left-[373px] flex h-[29px] w-[207px] bg-[#2c3136] text-[12px] leading-none text-[#c8c8c8]">
        <span className="flex w-[62px] items-center justify-center bg-[#283134] tracking-[-0.3px]">海通-韩</span>
        {["买", "卖", "撤", "查"].map((t) => <span key={t} className="flex w-[28px] items-center justify-center border-l border-[#1c2024]">{t}</span>)}
        <span className="flex w-[33px] items-center justify-center border-l border-[#1c2024]"><svg className="h-[10px] w-[13px]" viewBox="0 0 13 10"><path d="M.5 2.500h9.500v7H.5zM3 2.500V.7h9.500v7.500H10" stroke="#c8c8c8" strokeWidth="1.400" fill="none" /></svg></span>
      </div>
    </div>
  );
}

/* ---------- order queues ---------- */

type Block = { n: string; p: string; v: string; c: string; note?: string; rows: string[]; more?: boolean; hot?: [number, number] };

const SELL: Block[] = [
  { n: "卖一", p: "4.91", v: "2571", c: "109", more: true, rows: ["19 2 8 10 28 2 10 10 2 13 30 10 150 10 53 8 2 22 38 3", "3 10 5 12 2 30 5 2 1 20 21 10 6 500 23 1 10 35 1 2", "50 30 40 3 2 20 21 50"] },
  { n: "卖二", p: "4.92", v: "1407", c: "56", more: true, rows: ["1 3 2 10 34 10 50 5 1 36 11 50 20 20 1 5 2 8 10 11", "19 7 1 5 2 10 5 30 10 50 5 89 8 27 14 10 50 20 4 1", "5 1 14 19 52 30 5 25"] },
  { n: "卖三", p: "4.93", v: "891", c: "39", rows: ["32 41 3 50 10 1 5 10 5 7 1 3 30 30 30 20 26 2 100 10", "44 5 50 35 5 1 20 70 3 20 2 2 20 5 13 20 10 50"] },
  { n: "卖四", p: "4.94", v: "682", c: "35", rows: ["10 5 10 20 22 10 3 40 1 1 10 11 1 25 70 10 14 2 88 1", "1 4 20 10 20 10 170 5 5 40 4 6 5 11"] },
];
const BUY: Block[] = [
  { n: "买一", p: "4.90", v: "3713", c: "151", more: true, rows: ["277 11 151 20 7 44 2 36 23 20 260 2 20 4 10 60 19 24 9 20", "4 3 30 4 24 200 10 4 10 5 12 2 26 2 23 5 21 7 22 1", "1 10 200 10 3 1 8 1"] },
  { n: "买二", p: "4.89", v: "7393", c: "160", note: "主力买单3484手,共1笔", more: true, hot: [0, 2], rows: ["4 1 3484 25 30 1 2 10 30 25 5 1 5 20 271 196 83 6 1 29", "4 1 30 10 4 100 5 28 1 45 86 40 1 15 5 10 40 10 40 4", "15 10 2 3 15 30 24 1"] },
  { n: "买三", p: "4.88", v: "3038", c: "51", note: "主力买单1176手,共1笔", more: true, hot: [0, 11], rows: ["49 5 10 10 1 18 55 10 380 1 5 1176 2 10 30 70 20 20 395 22", "16 20 4 10 5 70 2 10 20 11 61 1 7 145 1 10 10 10 100 35", "57 5 30 4 1 16 2 20"] },
  { n: "买四", p: "4.87", v: "947", c: "27", rows: ["14 20 2 51 20 20 2 10 250 100 20 20 4 40 4 5 20 6 10 5"] },
];

function Queue({ blocks, color, cls, thumb }: { blocks: Block[]; color: string; cls: string; thumb: string }) {
  return (
    <div className={"flex h-[322px] shrink-0 " + cls}>
      <div className="flex min-w-0 flex-1 flex-col overflow-hidden border border-r-0 border-[#800000]">
        {blocks.map((b) => (
          <div key={b.n} className="shrink-0 border-b border-[#383838] text-[14px] leading-none font-bold">
            <div className="flex h-[24px] items-center pb-[2px]">
              <span className="w-[49px] pl-[4px] text-[16px] font-normal text-white">{b.n}</span>
              <span className="w-[55px] pl-[4px] text-[#ff3232]">{b.p}</span>
              <span className="text-[#ffff80]">{b.v}</span>
              <span className="text-[16px] font-normal text-[#ffff80]">手</span>
              <span className="ml-[13px] text-[#ffff80]">{b.c}</span>
              <span className="text-[16px] font-normal text-[#ffff80]">笔</span>
              {b.note && <span className="ml-[13px] text-[12px] font-normal tracking-[-0.1px] text-[#ff3232]">{b.note}</span>}
            </div>
            {b.rows.map((r, ri) => (
              <div key={ri} className={"flex h-[24px] items-center pb-[2px] last:h-[23px] last:pb-px " + color}>
                {r.split(" ").map((v, ci) => {
                  const hot = b.hot && b.hot[0] === ri && b.hot[1] === ci;
                  return (
                    <span key={ci} className="flex w-[46.900px] justify-end first:w-[41.500px]">
                      <span className={hot ? "-mr-[4px] flex h-[20px] items-center bg-[#401c1e] pr-[4px] pl-[10px]" : ""}>{v}</span>
                    </span>
                  );
                })}
                {b.more && ri === b.rows.length - 1 && <span className="ml-[15px] flex h-[14px] w-[35px] items-center justify-center bg-[#585858] text-[12px] font-normal text-black">展开</span>}
              </div>
            ))}
          </div>
        ))}
      </div>
      <div className="flex w-[12px] shrink-0 flex-col items-center bg-[#1b1b1b]">
        <svg className="h-[12px] w-[12px] shrink-0" viewBox="0 0 12 12"><path d="M3 9h6L6 4z" fill="#666" /></svg>
        <div className={"w-[12px] shrink-0 bg-[#424242] " + thumb} />
        <svg className="mt-auto h-[12px] w-[12px] shrink-0" viewBox="0 0 12 12"><path d="M3 4h6L6 9z" fill="#666" /></svg>
      </div>
    </div>
  );
}

const SUBTABS = [["设置", "w-[33px]"], ["分时量", "w-[51px]"], ["成交统计", "w-[62px]"], ["买卖力道", "w-[62px]"], ["大单净量分时", "w-[86px]"], ["散户数量分时", "w-[86px]"], ["大单金额分时", "w-[86px]"], ["高抛低吸", "w-[62px]"], ["千档委比", "w-[62px]"], ["分时人气资金", "w-[87px]"]];
const SHEETS = ["挂单数单", "分价表", "拖拉机单"];

function Center() {
  return (
    <div className="flex w-[1906px] shrink-0 flex-col overflow-hidden">
      <ChartPanel />
      <div className="flex h-[17px] shrink-0 items-center justify-between">
        <div className="flex h-[17px] border border-r-0 border-[#800000] text-[12px] leading-none text-[#c0c0c0]">
          {SUBTABS.map(([t, c]) => (
            <span key={t} className={"flex items-center justify-center border-r border-[#800000] pb-px whitespace-nowrap " + c + (t === "分时量" ? " bg-[#800000] text-white" : "")}>{t}</span>
          ))}
        </div>
        <div className="mr-[6px] flex h-[14px] w-[35px] items-center justify-between rounded-full bg-[#c0c0c0] pr-[4px] pl-[1px] text-[12px] leading-none text-black">
          <span className="h-[12px] w-[12px] rounded-full bg-black" />弹
        </div>
      </div>
      <div className="flex h-[23px] shrink-0 items-center pb-[5px] text-[14px] leading-none text-[#ffff80]">
        <span className="w-[953px] pl-[15px]">委卖队列</span>
        <span className="pl-[15px]">委买队列</span>
      </div>
      <div className="flex h-[322px] shrink-0">
        <Queue blocks={SELL} color="text-[#00e600]" cls="w-[950px]" thumb="h-[98px]" />
        <Queue blocks={BUY} color="text-[#ff3232]" cls="ml-[3px] w-[951px]" thumb="h-[111px]" />
      </div>
      <div className="flex h-[16px] shrink-0 pt-[2px] pl-[1px] text-[12px] leading-[14px] whitespace-nowrap">
        <span className="flex w-[34px] justify-center gap-[8px] bg-[#f0f0f0] text-[#888]"><i>◂</i><i>▸</i></span>
        <span className="relative z-10 ml-[3px] flex w-[62px] skew-x-[20deg] items-start justify-center bg-[#800000] text-white"><span className="-skew-x-[20deg]">买卖队列</span></span>
        {SHEETS.map((t) => (
          <span key={t} className="flex -skew-x-[20deg] border-l border-[#444] bg-[#8c8c8c] px-[4px] text-black"><span className="skew-x-[20deg]">{t}</span></span>
        ))}
      </div>
    </div>
  );
}

/* ---------- quote panel ---------- */

const ASKS = "22 5.12 3.1 g|21 5.11 7.1 g|20 5.10 134.0 o|19 5.09 7.8 g|18 5.08 30.2 o|17 5.07 65.1 o|16 5.06 33.3 o|15 5.05 119.9 o|14 5.04 4.6 g|13 5.03 16.2 o|12 5.02 61.6 o|11 5.01 13.1 o|10 5.00 597.3 o|9 4.99 91.4 o|8 4.98 86.9 o|7 4.97 12.4 o|6 4.96 36.4 o|5 4.95 225.8 o|4 4.94 33.7 o|3 4.93 43.9 o|2 4.92 69.2 o|1 4.91 126.2 o".split("|").map((s) => s.split(" "));
const BIDS = "1 4.90 182.0 r|2 4.89 361.5 r|3 4.88 148.3 r|4 4.87 46.1 r|5 4.86 121.8 r|6 4.85 20.4 r|7 4.84 9.5 g|8 4.83 34.8 r|9 4.82 39.6 r|10 4.81 21.7 r|11 4.80 53.4 r|12 4.79 13.5 r|13 4.78 32.5 r|14 4.77 63.0 r|15 4.76 15.3 r|16 4.75 14.9 r|17 4.74 9.0 g|18 4.73 21.5 r|19 4.72 27.9 r|20 4.71 19.8 r|21 4.70 64.2 r".split("|").map((s) => s.split(" "));
const DOT: Record<string, string> = { g: "bg-[#808080]", o: "bg-[#00e600]", r: "bg-[#ff3232]" };

function Wan({ v }: { v: string }) {
  return <>{v}<span className="text-[15.500px] font-normal">万</span></>;
}

function Level({ row, cls }: { row: string[]; cls: string }) {
  const [n, p, v, d] = row;
  const f = Number(p);
  const pc = f > 4.83 ? "text-[#ff3232]" : f < 4.83 ? "text-[#00e600]" : "text-white";
  return (
    <div className={"flex shrink-0 items-center pb-[2px] text-[14px] leading-none font-bold " + cls}>
      <span className="w-[50px] pl-[11px] text-[#c0c0c0]">{n}</span>
      <span className={"w-[40px] text-right " + pc}>{p}</span>
      <span className="flex w-[79px] items-center justify-end text-[#02e2f4]"><Wan v={v} /></span>
      <span className={"ml-[13px] h-[8px] w-[8px] rounded-full " + DOT[d]} />
    </div>
  );
}

function Pager({ cls }: { cls: string }) {
  return (
    <div className={"flex shrink-0 items-center border-b border-[#800000] text-[12px] leading-none text-[#ffff00] " + cls}>
      {["上翻", "下翻", "顶部", "底部"].map((t) => <span key={t} className="w-[55.500px] text-center">{t}</span>)}
    </div>
  );
}

function Pair4({ a, av, b, bv, cls, ac }: { a: string; av: string; b: string; bv: string; cls: string; ac: string }) {
  return (
    <div className={"flex shrink-0 items-center border-b border-[#800000] pr-[1px] pb-[3px] pl-[1px] text-[14px] leading-none font-bold " + cls}>
      <span className="text-[16px] font-normal text-[#c0c0c0]">{a}</span>
      <span className={"flex-1 text-right " + ac}>{av}</span>
      <span className="ml-[3px] text-[16px] font-normal text-[#c0c0c0]">{b}</span>
      <span className="w-[61px] text-right text-[#02e2f4]">{bv}</span>
    </div>
  );
}

function Book() {
  return (
    <div className="flex w-[225px] shrink-0 flex-col overflow-hidden border-x border-t border-[#800000]">
      <div className="flex h-[19px] shrink-0 items-center pb-px pl-[47px] text-[16px] leading-none text-[#02e2f4]"><span className="w-[73px] font-medium tracking-[1px]">宝塔实业</span><span className="text-[14.500px]">000595</span></div>
      <div className="flex h-[37px] shrink-0 items-center border-b border-[#800000] leading-none">
        <span className="ml-[24px] w-[54px] pt-[2px] font-['DejaVu_Sans_Mono'] text-[22px] text-[#ff3232]">4.90</span>
        <div className="ml-[26px] flex w-[60px] flex-col gap-[4px] text-[13.500px] leading-[14px] font-medium text-[#ff3232]"><span>+0.07</span><span>+1.45%</span></div>
        <span className="ml-[7px] flex h-[20px] w-[51px] items-center justify-center border border-[#707070] text-[12px] tracking-[-0.4px] whitespace-nowrap text-[#808080]">+加自选</span>
      </div>
      <div className="flex h-[47px] shrink-0 border-b border-[#800000] text-[12px] leading-none">
        <span className="flex w-[67px] items-center justify-center border-r border-[#800000] text-[#ff3232]">买56档</span>
        <span className="flex w-[92px] items-center justify-center border-r border-[#800000] text-[#ffff00]">查看完整报价</span>
        <span className="flex w-[64px] items-center justify-center text-[#00e600]">卖41档</span>
      </div>
      <div className="flex h-[46px] shrink-0 items-center border-b border-[#800000] pr-[1px] pb-[3px] pl-[1px] text-[14px] leading-none font-bold text-[#00e600]">
        <span className="w-[66px] text-[16px] font-normal text-[#c0c0c0]">委比</span>
        <span className="flex-1">-6.44%</span>
        <span>-9403</span>
      </div>
      <Pair4 a="均卖价" av="5.15" ac="text-[#ff3232]" b="总卖量" bv="77704" cls="h-[45px]" />
      <Pager cls="h-[45px]" />
      <div className="flex h-[442px] shrink-0 border-b border-[#800000]">
        <div className="flex w-[20px] shrink-0 flex-col items-center border-r border-[#800000] pt-[1px] text-[16px] leading-none text-[#c0c0c0]">
          <span className="text-[14px]">¥</span><span className="mt-[180px]">卖</span><span className="mt-[16px]">盘</span>
        </div>
        <div className="flex flex-1 flex-col pt-[1px]">{ASKS.map((r) => <Level key={r[0]} row={r} cls="h-[20px]" />)}</div>
      </div>
      <div className="flex h-[436px] shrink-0 border-b border-[#800000]">
        <div className="flex w-[20px] shrink-0 flex-col items-center border-r border-[#800000] pt-[192px] text-[16px] leading-none text-[#c0c0c0]">
          <span>买</span><span className="mt-[16px]">盘</span>
        </div>
        <div className="flex flex-1 flex-col pt-[1px]">{BIDS.map((r) => <Level key={r[0]} row={r} cls="h-[20.690px]" />)}</div>
      </div>
      <Pager cls="h-[53px]" />
      <Pair4 a="均买价" av="4.64" ac="text-[#00e600]" b="总买量" bv="68302" cls="h-[52px]" />
      <Pair4 a="总笔数" av="78885" ac="text-[#02e2f4]" b="均笔量" bv="21" cls="h-[50px]" />
    </div>
  );
}

/* ---------- statistics and trades ---------- */

const STATS = [
  "最新 4.90 r 开盘 4.99 r", "涨跌 +0.07 r 最高 5.07 r", "涨幅 +1.45% r 最低 4.48 o", "振幅 12.22% c 量比 2.55 r",
  "总手 165.9万 c 换手 22.06% c", "金额 8.02亿 c 换手(实) 46.94% c", "市盈(静) 亏损 w 市盈(动) 亏损 w", "总市值 37.45亿 c 流通值 36.84亿 c",
  "总股本 7.64亿 c 流通股 7.52亿 c", "涨停 5.31 r 跌停 4.35 o", "外盘 83.43万 r 内盘 82.43万 o",
].map((s) => s.split(" "));
const TC: Record<string, string> = { r: "text-[#ff3232]", o: "text-[#00e600]", c: "text-[#02e2f4]", w: "text-[#c0c0c0]", x: "text-white" };

function Val({ v }: { v: string }) {
  const m = v.match(/^([^万亿亏]*)(.*)$/)!;
  return <>{m[1]}<span className="text-[15.500px] font-normal">{m[2]}</span></>;
}

const TICKS = "874 6.37万 130|875 6370 13|876 1470 3|877 490 1|878 980 2|879 4900 10|880 490 1|881 490 1|882 9800 20|883 9800 20|884 9800 20|885 2.45万 50".split("|").map((s) => s.split(" "));
const TRADES = "14:55 4.85 15.8 o 33|14:55 4.86 12.8 r 20|14:55 4.86 15.7 r 30|14:55 4.87 24.0 r 13|14:55 4.86 30.9 o 19|14:55 4.87 3.8 r 10|14:55 4.87 134.0 r 79|14:55 4.87 34.5 r 37|14:55 4.86 9.1 o 19|14:55 4.86 40.1 o 20|14:55 4.87 18.2 r 12|14:55 4.88 17.8 r 23|14:55 4.88 69.2 r 45|14:55 4.88 68.8 r 61|14:56 4.87 50.0 o 38|14:56 4.88 473.4 x 62|14:56 4.89 52.8 r 37|14:56 4.88 61.0 o 38|14:56 4.88 16.7 o 27|14:56 4.89 37.2 r 40|14:56 4.89 24.6 o 26|14:56 4.88 19.5 o 22|14:56 4.88 52.0 o 31|14:56 4.89 58.0 r 27|14:56 4.89 67.8 r 59|14:56 4.88 63.7 o 59|14:56 4.88 49.2 r 36|14:56 4.88 36.4 o 27|14:56 4.88 34.6 o 52|14:56 4.89 93.1 r 25|14:56 4.89 69.5 o 19|14:56 4.89 159.5 o 113|14:56 4.90 147.5 r 87|14:56 4.90 28.6 o 35|14:57 4.91 13.5 r 22|15:00 4.90 1104.7 o 1065".split("|").map((s) => s.split(" "));

function Stats() {
  return (
    <div className="relative flex w-[250px] shrink-0 flex-col overflow-hidden">
      <div className="flex h-[232px] shrink-0 flex-col border-b border-[#800000] pl-[1px]">
        {STATS.map(([a, av, c1, b, bv, c2]) => (
          <div key={a} className="flex h-[21px] shrink-0 items-center pb-[3px] text-[14px] leading-none font-bold whitespace-nowrap">
            <span className="w-[58px] text-[16px] font-normal tracking-[-0.3px] text-[#c0c0c0]">{a}</span>
            <span className={"flex w-[64px] items-center justify-end " + TC[c1]}><Val v={av} /></span>
            <span className="ml-[4px] w-[62px] text-[16px] font-normal tracking-[-0.3px] text-[#c0c0c0]">{b}</span>
            <span className={"flex w-[59px] items-center justify-end " + TC[c2]}><Val v={bv} /></span>
          </div>
        ))}
      </div>
      <div className="flex h-[23px] shrink-0 items-center border-b border-[#800000] leading-none">
        <span className="ml-[1px] flex h-[20px] w-[14px] items-center justify-center border border-[#800000]"><svg className="h-[5px] w-[7px]" viewBox="0 0 7 5"><path d="M0 0h7L3.500 5z" fill="#ddd" /></svg></span>
        <span className="ml-[2px] w-[78px] pb-px text-[12.900px] font-bold whitespace-nowrap text-[#d0d0d0]">逐笔成交明细</span>
        <span className="ml-[5px] flex h-[14px] w-[14px] items-center justify-center rounded-full border border-[#c01818] text-[9px] text-[#ff3232]">详</span>
        <span className="ml-[58px] flex h-[22px] w-[58px] items-center justify-center border-2 border-[#ff3232] text-[13px] font-bold whitespace-nowrap text-[#ff3232]">逐笔大单</span>
        <span className="ml-[3px] flex h-[18px] w-[18px] shrink-0 items-center justify-center gap-[2px] rounded-full border-2 border-[#888] bg-[#333]"><i className="h-[8px] w-[2px] bg-white" /><i className="h-[8px] w-[2px] bg-white" /></span>
      </div>
      <div className="flex h-[20px] shrink-0 items-center text-[12px] leading-none text-[#808080]">
        <span className="w-[45px] text-right">时间</span><span className="w-[40px] text-right">价格</span><span className="w-[51px] text-right">金额</span><span className="w-[53px] text-right">买单</span><span className="w-[52px] text-right">卖单</span>
      </div>
      <div className="flex h-[242px] shrink-0 border-b border-[#800000] font-['DejaVu_Sans_Mono','Noto_Sans_CJK_SC'] text-[11px] tracking-[-0.6px]">
        <div className="flex w-[146px] flex-col">
          {[["15:00:00", "3283", ""], ...TICKS].map(([t, v], i) => (
            <div key={i} className="flex h-[18.570px] shrink-0 items-center leading-none">
              <span className={"w-[48px] text-right " + (i ? "text-[#ffff00]" : "text-[#c0c0c0]")}>{t}</span>
              <span className="w-[41px] text-right text-[#ff3232]">4.90</span>
              <span className="w-[52px] text-right text-[#00e600]">{v}</span>
            </div>
          ))}
        </div>
        <div className="mt-[2px] flex w-[53px] flex-col justify-center border border-[#606060] pr-[3px] pb-[2px] text-right leading-[18px] text-[#ffff00]"><span>278手</span><span>13.61万</span></div>
        <div className="flex w-[51px] flex-col">
          <div className="mt-[2px] flex h-[16px] items-center justify-end border border-r-0 border-l-0 border-[#606060] pr-[4px] leading-none text-[#ffff00]">41手</div>
          {TICKS.map(([t, , n]) => (
            <div key={t} className="flex h-[18.570px] shrink-0 items-center justify-end pr-px leading-none text-[#00e600]">{n}<svg className="ml-[2px] h-[8px] w-[7px]" viewBox="0 0 7 8"><path d="M2 0h3v4h2L3.500 8 0 4h2z" fill="#00e600" /></svg></div>
          ))}
        </div>
      </div>
      <div className="flex flex-col pt-[1px]">
        {TRADES.map(([t, p, v, c, n], i) => (
          <div key={i} className="flex h-[21px] shrink-0 items-center pb-[3px] text-[14px] leading-none font-bold whitespace-nowrap">
            <span className="w-[50px] pl-[2px] tracking-[-0.2px] text-[#c0c0c0]">{t}</span>
            <span className="w-[76px] text-right text-[#ff3232]">{p}</span>
            <span className={"flex w-[74px] items-center justify-end " + TC[c]}><Wan v={v} /></span>
            <span className="w-[50px] text-right text-[#02e2f4]">{n}</span>
          </div>
        ))}
      </div>
      <svg className="absolute top-[714px] left-[217px] h-[76px] w-[76px]" viewBox="0 0 76 76">
        <defs>
          <linearGradient id="bird" x1="0" y1="0" x2="1" y2="1"><stop offset="0" stopColor="#5ab8ff" /><stop offset="0.35" stopColor="#5a96fa" /><stop offset="0.8" stopColor="#a060f0" /></linearGradient>
          <linearGradient id="disc" x1="0" y1="0" x2="0" y2="1"><stop offset="0" stopColor="#e6edfb" /><stop offset="1" stopColor="#fcfcff" /></linearGradient>
        </defs>
        <circle cx="38" cy="38" r="37.500" fill="url(#disc)" />
        <path d="M5 12L16 17C24 13 29 16 33 22L60 30C60 60 19 58 18 34C18 26 18 20 5 12Z" fill="url(#bird)" />
      </svg>
    </div>
  );
}

export default function App() {
  return (
    <div className={"flex h-[1333px] w-[2449px] flex-col overflow-hidden bg-black " + CJK}>
      <MenuBar />
      <div className="h-[2px] shrink-0 border-t border-[#9c9c9c] bg-[#e8e8e8]" />
      <Toolbar />
      <div className="flex min-h-0 flex-1">
        <Sidebar />
        <div className="w-[3px] shrink-0 bg-[#c0c0c0]" />
        <VTabs />
        <div className="w-px shrink-0" />
        <Center />
        <Book />
        <Stats />
      </div>
    </div>
  );
}
